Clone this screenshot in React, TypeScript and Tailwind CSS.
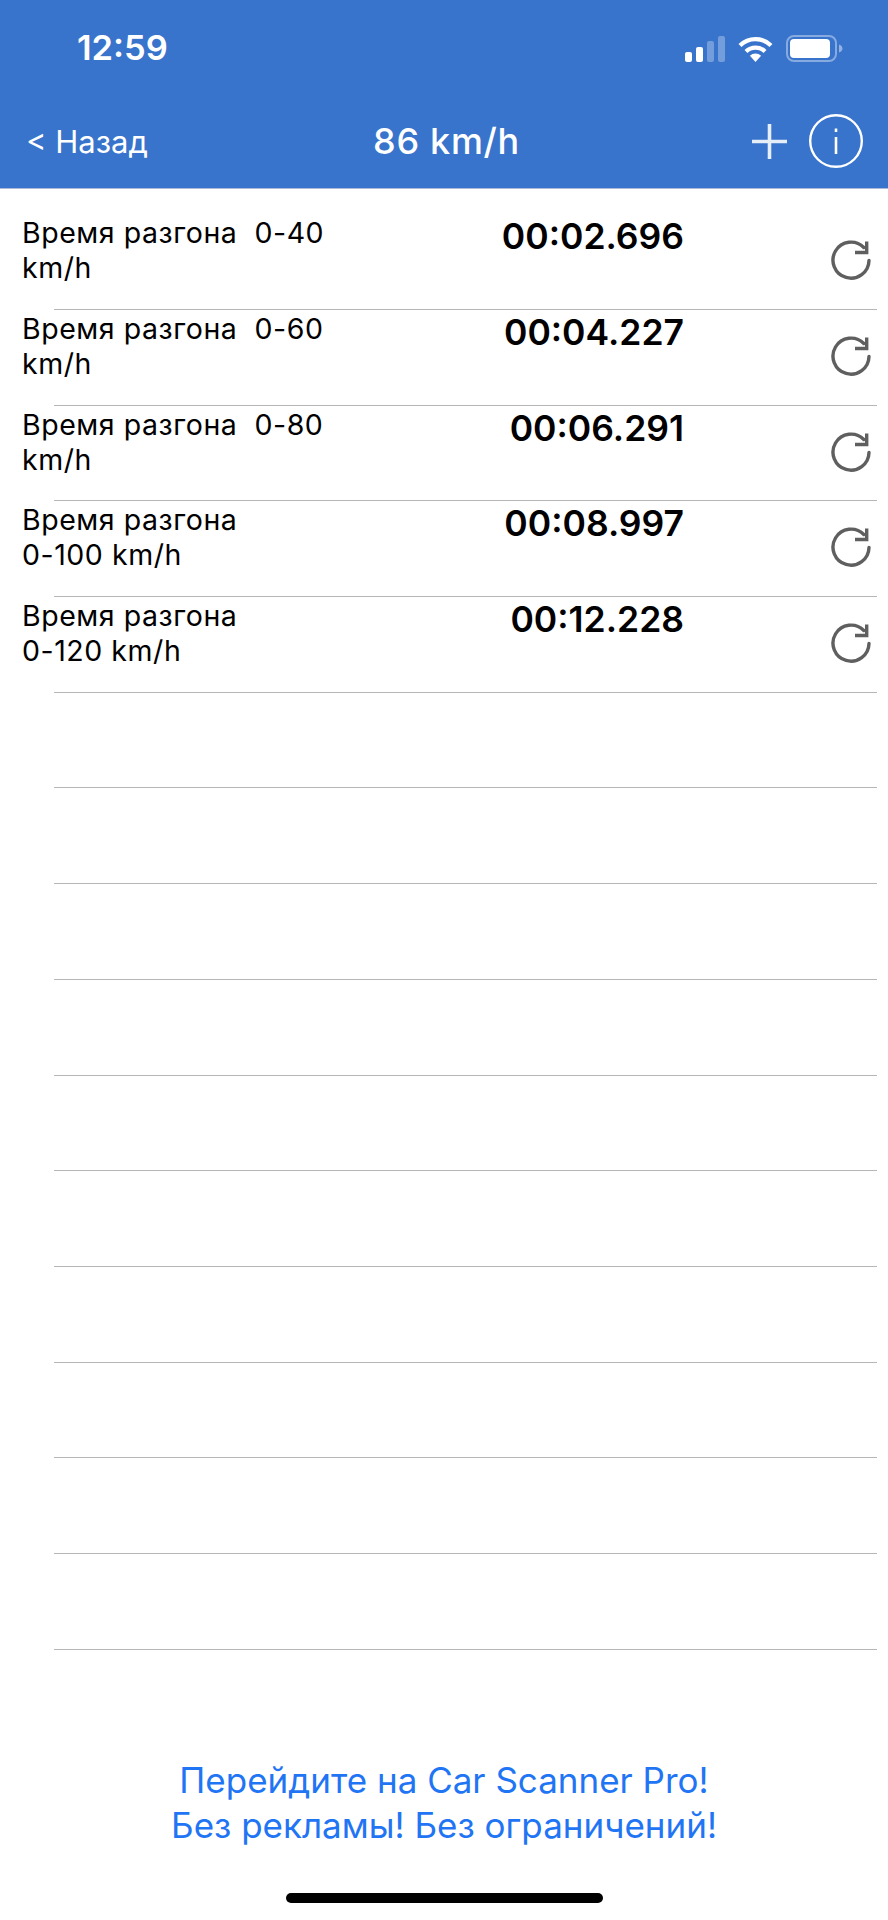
const FONT = "font-['Inter','Liberation_Sans',sans-serif]";

const results = [
  { line1: 'Время разгона  0-40', line2: 'km/h', time: '00:02.696' },
  { line1: 'Время разгона  0-60', line2: 'km/h', time: '00:04.227' },
  { line1: 'Время разгона  0-80', line2: 'km/h', time: '00:06.291' },
  { line1: 'Время разгона', line2: '0-100 km/h', time: '00:08.997' },
  { line1: 'Время разгона', line2: '0-120 km/h', time: '00:12.228' },
];

function ReloadIcon() {
  return (
    <svg width="40" height="40" viewBox="0 0 40 40" fill="none" stroke="#5f5f5f" strokeWidth="3.4" strokeLinecap="round" className="shrink-0">
      <path d="M38 20.5A18 18 0 1 1 32.8 7.5" />
      <path d="M35.7 1.5V12.5H24" strokeLinecap="butt" />
    </svg>
  );
}

function StatusIcons() {
  return (
    <div className="flex items-center gap-[13px]">
      <svg width="40" height="26" viewBox="0 0 40 26" fill="white">
        <rect x="0" y="16" width="7" height="10" rx="2" />
        <rect x="11" y="11" width="7" height="15" rx="2" />
        <rect x="22" y="5" width="7" height="21" rx="2" opacity="0.3" />
        <rect x="33" y="0" width="7" height="26" rx="2" opacity="0.3" />
      </svg>
      <svg width="35" height="26" viewBox="0 0 35 26" fill="none" stroke="white" strokeWidth="4.2">
        <path d="M2 9.5a22 22 0 0 1 31 0" />
        <path d="M8 15.5a13.5 13.5 0 0 1 19 0" />
        <path d="M17.5 26l-5.6-6.2a8 8 0 0 1 11.2 0z" fill="white" stroke="none" />
      </svg>
      <svg width="57" height="27" viewBox="0 0 57 27" fill="none">
        <rect x="1" y="1" width="49" height="25" rx="7" stroke="white" strokeOpacity="0.4" strokeWidth="2" />
        <rect x="4" y="4" width="40" height="19" rx="4" fill="white" />
        <path d="M53 9.5c2.5 1 3.5 2.5 3.5 4s-1 3-3.5 4z" fill="white" fillOpacity="0.45" />
      </svg>
    </div>
  );
}

export default function App() {
  return (
    <div className={`${FONT} relative flex h-[1920px] w-[888px] flex-col overflow-hidden bg-white`}>
      <header className="h-[189px] shrink-0 border-b border-[#a9b9d6] bg-[#3873cc] text-white">
        <div className="flex h-[96px] items-center justify-between pl-[77px] pr-[45px] pt-[1px]">
          <span className="text-[34.5px] font-semibold leading-none">12:59</span>
          <StatusIcons />
        </div>
        <div className="relative flex h-[90px] items-center justify-between pl-[26px] pr-[25px]">
          <span className="text-[31px] leading-none">&lt; Назад</span>
          <span className="absolute left-[5px] right-0 text-center text-[36px] font-medium leading-none tracking-[0.7px]">86 km/h</span>
          <div className="flex items-center gap-[22px]">
            <svg width="35" height="35" viewBox="0 0 35 35" stroke="white" strokeWidth="3.6" opacity="0.88">
              <path d="M17.5 0v35M0 17.5h35" />
            </svg>
            <svg width="54" height="54" viewBox="0 0 54 54" fill="none" stroke="white" strokeWidth="2.4">
              <circle cx="27" cy="27" r="25.8" />
              <path d="M27 23v17" strokeWidth="2.6" />
              <path d="M27 14.5v3.5" strokeWidth="2.6" />
            </svg>
          </div>
        </div>
      </header>

      <main className="flex flex-col">
        <div className="flex h-[120px] items-start pl-[22px] pr-[17px] pt-[27px]">
          <Row {...results[0]} />
        </div>
        <Separator />
        {results.slice(1).map((row) => (
          <div key={row.time}>
            <div className="flex h-[94.7px] items-start pl-[22px] pr-[17px] pt-[2px]">
              <Row {...row} />
            </div>
            <Separator />
          </div>
        ))}
        {Array.from({ length: 10 }, (_, i) => (
          <div key={i}>
            <div className="h-[94.7px]" />
            <Separator />
          </div>
        ))}
      </main>

      <div className="mt-auto flex flex-col items-center pb-[17px]">
        <p className="text-center text-[35px] leading-[45px] text-[#1f75f4]">
          Перейдите на Car Scanner Pro!
          <br />
          Без рекламы! Без ограничений!
        </p>
        <div className="mt-[45px] h-[10px] w-[317px] rounded-full bg-black" />
      </div>
    </div>
  );
}

function Separator() {
  return <div className="ml-[54px] mr-[11px] h-px bg-[#b6b6b6]" />;
}

function Row({ line1, line2, time }: { line1: string; line2: string; time: string }) {
  return (
    <>
      <div className="-mt-px w-[340px] whitespace-pre text-[28.5px] leading-[35px] tracking-[0.55px] text-black">
        {line1}
        <br />
        {line2}
      </div>
      <div className="w-[322px] text-right text-[35.5px] font-semibold leading-[42px] text-black">{time}</div>
      <div className="ml-auto pt-[24px]">
        <ReloadIcon />
      </div>
    </>
  );
}
